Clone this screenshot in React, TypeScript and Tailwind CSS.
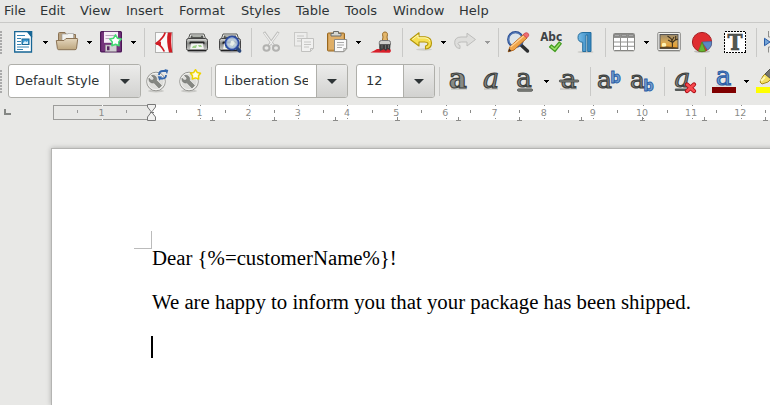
import type { ReactNode } from "react";

const Icon = ({ className = "", children }: { className?: string; children: ReactNode }) => (
  <svg viewBox="0 0 24 24" className={`h-6 w-6 shrink-0 overflow-visible ${className}`}>{children}</svg>
);

const Arrow = ({ className = "", muted = false }: { className?: string; muted?: boolean }) => (
  <svg viewBox="0 0 5 3" className={`h-[3px] w-[5px] shrink-0 ${className}`} shapeRendering="crispEdges">
    <path d="M0 0H5V1H4V2H3V3H2V2H1V1H0Z" fill={muted ? "#999" : "#000"} />
  </svg>
);

const Sep = ({ className = "" }: { className?: string }) => (
  <div className={`h-[29px] w-px shrink-0 bg-[#c9c9c7] ${className}`} />
);

const Grip = () => (
  <svg viewBox="0 0 2 23" className="h-[23px] w-[2px] shrink-0" shapeRendering="crispEdges">
    {[0, 3, 6, 9, 12, 15, 18, 21].map((y) => (
      <rect key={y} x="0" y={y} width="2" height="2" fill="#aaa" />
    ))}
  </svg>
);

const Combo = ({ text, className, inner }: { text: string; className: string; inner: string }) => (
  <div className={`flex h-[34px] shrink-0 overflow-hidden rounded-[3px] border border-[#afafaa] bg-white ${className}`}>
    <div className={`min-w-0 grow py-[7px] text-[13px] leading-[17px] ${inner}`}>
      <div className="overflow-hidden whitespace-nowrap">{text}</div>
    </div>
    <div className="flex w-[31px] shrink-0 items-center justify-center border-l border-[#afafaa] bg-linear-to-b from-[#ececeb] to-[#d2d2d0]">
      <svg viewBox="0 0 10 5" className="h-[5px] w-[10px]">
        <path d="M0 0H10L5 5Z" fill="#2e3436" />
      </svg>
    </div>
  </div>
);

const Printer = () => (
  <>
    <ellipse cx="12" cy="21.6" rx="10" ry="1.4" fill="#bbb" />
    <path d="M5 4H19L21 10H3Z" fill="#eeeeec" stroke="#555753" />
    <path d="M6 5.5H18L18.6 8H5.4Z" fill="#555753" />
    <path d="M7.5 6.2H16" stroke="#d3d7cf" />
    <rect x="1.5" y="8.5" width="21" height="12" rx="2" fill="url(#metal)" stroke="#444" />
    <rect x="4.5" y="11.5" width="15" height="3" rx="1" fill="#222" />
    <path d="M6 13.5H18L19.5 19.5H4.5Z" fill="#f5f5f3" stroke="#aaa" strokeWidth=".7" />
    <path d="M8 16L12 15L11 18H7ZM13 15H16L17 17H14Z" fill="#9fd28a" />
    <path d="M3 20.5H21" stroke="#222" strokeWidth="1.5" />
  </>
);

type GlyphProps = { x?: number; y?: number; size?: number; italic?: boolean; blue?: boolean; bold?: boolean };
const Glyph = ({ x = 2, y = 19, size = 25, italic = false, blue = false, bold = false }: GlyphProps) => (
  <text
    x={x}
    y={y}
    fontFamily="'DejaVu Serif', serif"
    fontSize={size}
    fontStyle={italic ? "italic" : "normal"}
    fontWeight={bold ? 700 : 400}
    fill={blue ? "#729fcf" : "#888a85"}
    stroke={blue ? "#2a5ca5" : "#3c403e"}
    strokeWidth="1.1"
  >
    a
  </text>
);

const ScriptB = ({ y }: { y: number }) => (
  <text
    x="13.2"
    y={y}
    fontFamily="'DejaVu Sans', sans-serif"
    fontWeight="700"
    fontSize="16.5"
    textLength="10.5"
    lengthAdjust="spacingAndGlyphs"
    fill="#729fcf"
    stroke="#2a5ca5"
    strokeWidth="1"
  >
    b
  </text>
);

const Wrench = () => (
  <>
    <ellipse cx="11" cy="22" rx="8" ry="1.5" fill="#c9c9c6" />
    <circle cx="11" cy="12.5" r="9.3" fill="#dededb" stroke="#979793" />
    <circle cx="11" cy="12.5" r="8.2" fill="none" stroke="#f3f3f1" />
    <path d="M6.5 6.5L9 9L8.3 11L6 11.3L4 9.2C3.5 12.5 6 14.5 9 13.8L14 19L16.5 16.5L11.5 11.5C12.4 8.8 10 5.5 6.5 6.5Z" fill="#858782" stroke="#70726e" strokeWidth=".6" />
  </>
);

const Menu = () => (
  <nav className="flex h-[23px] border-b border-[#c9c9c7] pl-[4px] text-[13px] leading-[21px]">
    <span className="w-[36px]">File</span>
    <span className="w-[40px]">Edit</span>
    <span className="w-[46px]">View</span>
    <span className="w-[53px]">Insert</span>
    <span className="w-[62px]">Format</span>
    <span className="w-[55px]">Styles</span>
    <span className="w-[49px]">Table</span>
    <span className="w-[48px]">Tools</span>
    <span className="w-[66px]">Window</span>
    <span>Help</span>
  </nav>
);

const StandardBar = () => (
  <div className="flex h-[39px] w-[800px] items-center pb-px">
    <Grip />
    <Icon className="ml-[9px]">
      <path d="M3.7 1.7H16.5L20.5 6.5V22H3.7Z" fill="#fff" stroke="#176695" strokeWidth="1.3" />
      <path d="M15.5 1H21.3V7.5Z" fill="#176695" />
      <path d="M6 5.5H14M6 8.5H10M6 11.5H10M6 14.5H10M6 17H18M6 19.5H12" stroke="#3684b2" />
      <rect x="11" y="9" width="7" height="5.5" fill="#3b98d0" stroke="#176695" />
      <path d="M12 13L14 11L15.5 12L17 11V14H12Z" fill="#d7eefa" />
    </Icon>
    <Arrow className="ml-[8px]" />
    <Icon className="ml-[7px]">
      <path d="M3.5 10V3.5Q3.5 2.5 4.5 2.5H10L11.5 4.5H20.5V12" fill="#b9a382" stroke="#8b7355" />
      <path d="M7 4H13V3.5H18.5V12H7Z" fill="#f2f2ef" stroke="#999" strokeWidth=".6" />
      <path d="M1.3 10.5H9L11 8.5H22Q22.8 8.5 22.6 9.5L21.5 18.5Q21.3 19.7 20 19.7H3.7Q2.6 19.7 2.4 18.5Z" fill="url(#folder)" stroke="#8b7355" />
    </Icon>
    <Arrow className="ml-[8px]" />
    <Icon className="ml-[7px]">
      <rect x="1.6" y="1.6" width="20.8" height="20.3" rx="1" fill="#75347c" stroke="#4b1757" strokeWidth="1.2" />
      <rect x="5" y="1.8" width="14" height="11" fill="#f6eef7" />
      <path d="M6.5 5.5H16M6.5 8.5H14" stroke="#bba7bd" />
      <rect x="6.5" y="15" width="11" height="6.5" fill="#d3d0d4" stroke="#999" strokeWidth=".5" />
      <rect x="8" y="16.3" width="2.5" height="4" fill="#5a2462" />
      <path d="M16.5 4.8L18.4 8.2L22.2 9L19.7 12L20.1 15.8L16.5 14.3L12.9 15.8L13.3 12L10.8 9L14.6 8.2Z" fill="#fff" stroke="#43dc72" strokeWidth="1.5" strokeLinejoin="round" />
    </Icon>
    <Arrow className="ml-[8px]" />
    <Sep className="ml-[8px]" />
    <Icon className="ml-[7px]">
      <rect x="3.5" y="2.5" width="17" height="20" fill="#fafafa" stroke="#b2b2b0" />
      <path d="M15.8 2.5H19.8Q18.5 11 20.3 22.5H17Q14 11 15.8 2.5Z" fill="#d01c24" />
      <path d="M13.2 2.5Q11.5 8 4.5 13.3Q9.5 15.5 12.3 21.5" fill="none" stroke="#d01c24" strokeWidth="1.7" />
      <path d="M4 12.8L9 11.5V15.5L4 14.8Z" fill="#d01c24" />
    </Icon>
    <Icon className="ml-[9px]"><Printer /></Icon>
    <Icon className="ml-[9px]">
      <Printer />
      <path d="M18.3 17.3L21.7 21" stroke="#2a4678" strokeWidth="3.4" strokeLinecap="round" />
      <circle cx="14" cy="13" r="6.5" fill="#b8c9d8" fillOpacity=".88" stroke="#2b4ba0" strokeWidth="2" />
      <circle cx="14" cy="13" r="5.3" fill="none" stroke="#8ca8dd" strokeWidth=".7" />
      <path d="M12 15L13 11L15 10.5L17 13L14.5 16Z" fill="#e7eee9" />
    </Icon>
    <Sep className="ml-[9px]" />
    <Icon className="ml-[7px]">
      <path d="M5 2L15 16M19.5 2L9.5 16" stroke="#bdbdbb" strokeWidth="2.8" />
      <path d="M5.3 2.8L14.5 15.5M19.2 2.8L10 15.5" stroke="#f1f1f0" strokeWidth="1.2" />
      <ellipse cx="7.5" cy="18" rx="3" ry="2.8" fill="none" stroke="#b2b2b0" strokeWidth="2" />
      <ellipse cx="17" cy="18" rx="3" ry="2.8" fill="none" stroke="#b2b2b0" strokeWidth="2" />
    </Icon>
    <Icon className="ml-[9px]">
      <rect x="2.5" y="2.5" width="12.5" height="13.5" fill="#ededec" stroke="#c9c9c7" />
      <path d="M5 6H12M5 8.5H12M5 11H10" stroke="#c6c6c4" />
      <path d="M9.5 8.5H21.5V18L18.5 21.5H9.5Z" fill="#f1f1f0" stroke="#c1c1bf" />
      <path d="M12 12H19M12 14.5H19M12 17H17" stroke="#c6c6c4" />
      <path d="M18.5 21.5V18.5H21.5" fill="none" stroke="#c1c1bf" />
    </Icon>
    <Icon className="ml-[9px]">
      <rect x="2.5" y="3" width="17" height="18" rx="1" fill="#d3a056" stroke="#98671e" />
      <path d="M4 4.5H18V19H4Z" fill="#dfaf68" />
      <path d="M6 6V3.5H8.5V1.5H13.5V3.5H16V6Z" fill="#d5d7d2" stroke="#6b6d69" />
      <path d="M9.5 9.5H21.7V18.5L18.7 21.7H9.5Z" fill="#fafafa" stroke="#8b8b88" />
      <path d="M12 12.5H19M12 15H19M12 17.5H17" stroke="#aaa" />
      <path d="M18.7 21.7V18.5H21.7Z" fill="#d4d4d1" stroke="#8b8b88" strokeWidth=".6" />
    </Icon>
    <Arrow className="ml-[7px]" />
    <Icon className="ml-[8px]">
      <path d="M1.3 22.6Q5.5 20.8 8 19L21 18.8Q23 21.2 20.5 22.8Z" fill="#d91f2a" />
      <path d="M13.3 11L14 7Q12.5 2 16 2Q19.5 2 18 7L18.7 11Z" fill="#e4b76b" stroke="#986b29" />
      <path d="M10.3 12.5Q10.3 10.5 12.5 10.5H19.5Q21.5 10.5 21.5 12.5V14.5H10.3Z" fill="#cfd0cd" stroke="#777" />
      <path d="M10.3 14.5H21.5L21 20.5L18.8 19L17 21L14.7 19.3L11 21Q9.8 18 10.3 14.5Z" fill="#3b3d3c" />
      <path d="M13 15V18.5M16.5 15V19M19.5 15V18" stroke="#777" strokeWidth=".8" />
    </Icon>
    <Sep className="ml-[9px]" />
    <Icon className="ml-[6px]">
      <ellipse cx="15" cy="19.5" rx="8" ry="1.2" fill="#cecec9" />
      <path d="M1.3 9.5L10 2.8V6.7H16Q22.5 7.2 22.5 13Q22.5 18.5 16.5 19V16Q19 15.5 19 13.3Q18.5 12 15.5 12H10V16Z" fill="#f6df52" stroke="#b39609" strokeWidth="1.1" strokeLinejoin="round" />
      <path d="M3.2 9.4L9 5V7.9H16Q20 8 21 11" fill="none" stroke="#fff8b5" />
    </Icon>
    <Arrow className="ml-[8px]" />
    <Icon className="ml-[7px]">
      <path d="M22.5 9.5L14 3.2V7H8Q1.7 7.2 1.7 12.5Q1.7 18 7 18.5V15.5Q5 15 5 13.3Q5 12 8.5 12H14V16Z" fill="#dededc" stroke="#bdbdbb" strokeLinejoin="round" />
    </Icon>
    <Arrow className="ml-[8px]" muted />
    <Sep className="ml-[8px]" />
    <Icon className="ml-[7px]">
      <path d="M15 15L21.5 21" stroke="#2c2e30" strokeWidth="3.4" strokeLinecap="round" />
      <circle cx="9.5" cy="9.5" r="7.3" fill="#d7e3ed" fillOpacity=".65" stroke="#2c4f94" strokeWidth="2.2" />
      <circle cx="9.5" cy="9.5" r="6.9" fill="none" stroke="#709bd2" strokeWidth=".7" />
      <path d="M2.2 21.8L4 16.5L17.5 4.5L21 8L8 20Z" fill="#f0a448" stroke="#b56212" strokeWidth=".9" />
      <path d="M4.5 17L18 5.8" stroke="#ffd193" strokeWidth="1.3" />
      <path d="M17 4.7L19 3Q21 2 22.4 3.7Q23.3 5.2 22.2 6.5L20.7 8Z" fill="#ef6d72" stroke="#c43d42" strokeWidth=".7" />
      <path d="M2.2 21.8L3.2 18.5L5.5 21Z" fill="#3b2c24" />
    </Icon>
    <Icon className="ml-[9px]">
      <text x="1.2" y="11" fontFamily="'DejaVu Sans', sans-serif" fontWeight="700" fontSize="11.5" textLength="22" lengthAdjust="spacingAndGlyphs" fill="#3e4346">Abc</text>
      <path d="M10.5 17L12.5 15L15.5 17.5L20.2 12L22.3 13.7L16 21.5Z" fill="#9bdf68" stroke="#439d20" strokeWidth="1.2" strokeLinejoin="round" />
    </Icon>
    <Icon className="ml-[9px]">
      <ellipse cx="13.5" cy="22" rx="8" ry="1" fill="#c9c9c6" />
      <path d="M19 2.5H11Q6 2.8 6 7.5Q6 12 10.7 12.3V21.5H14V5H15.7V21.5H19Z" fill="url(#pilcrow)" stroke="#246e9e" />
    </Icon>
    <Sep className="ml-[9px]" />
    <Icon className="ml-[6px]">
      <rect x="1.5" y="3.5" width="21" height="17" rx="1" fill="#fff" stroke="#858582" />
      <path d="M2 4H22V8H2Z" fill="#8a8a88" />
      <path d="M2 7.5H22M2 12H22M2 16.3H22M8.5 4V20.5M15.5 4V20.5" stroke="#929290" />
      <path d="M3 5.5H7M10 5.5H14M17 5.5H21" stroke="#aaa" />
      <path d="M2 21.5H22" stroke="#cacac7" />
    </Icon>
    <Arrow className="ml-[8px]" />
    <Icon className="ml-[8px]">
      <rect x=".8" y="2.5" width="22.5" height="18" rx="1" fill="#f3f3f1" stroke="#858582" />
      <rect x="3" y="4.5" width="18" height="14" fill="url(#sunset)" stroke="#555" />
      <circle cx="7" cy="15" r="2.3" fill="#fff4b5" />
      <path d="M15 18.5Q16.3 13 14 8.5L10.5 6M14.8 12L11 10M15.5 12.5L18.7 9.5V6M15 10.5L17 7M18.5 10L21 9" fill="none" stroke="#3f3220" strokeWidth="1.1" />
      <path d="M3 17L10 16.5L21 17.5V18.5H3Z" fill="#5b4423" />
      <path d="M1.5 21.5H23" stroke="#c5c5c2" />
    </Icon>
    <Icon className="ml-[9px]">
      <ellipse cx="12" cy="21.5" rx="8" ry="1.5" fill="#bdbdb9" />
      <circle cx="12" cy="12" r="9.6" fill="#df2d30" stroke="#a51c20" />
      <path d="M12 12L21.6 11.5Q22.2 17 17.5 20Z" fill="#5b8ac4" stroke="#3f67a0" strokeWidth=".7" />
      <path d="M12 12L15.5 21Q12 22.4 8.5 21Z" fill="#66b832" stroke="#438b1c" strokeWidth=".7" />
    </Icon>
    <Icon className="ml-[9px]">
      <rect x="1.5" y="1.5" width="21" height="21" fill="#fff" stroke="#000" strokeDasharray="2 1" shapeRendering="crispEdges" />
      <text x="4.4" y="20" fontFamily="'DejaVu Serif', serif" fontWeight="700" fontSize="22" textLength="15" lengthAdjust="spacingAndGlyphs" fill="#555753" stroke="#343836" strokeWidth=".6">T</text>
    </Icon>
    <Sep className="ml-[9px]" />
    <Icon className="ml-[5px]">
      <path d="M2.5 8.3L8 12L2.5 15.7Z" fill="#73a3d6" stroke="#2a5ca5" />
      <path d="M6.5 1V7H14M6.5 22.5V17H14" fill="none" stroke="#8e8e8b" />
    </Icon>
  </div>
);

const FormatBar = () => (
  <div className="flex h-[38px] w-[800px] items-center">
    <Grip />
    <Combo text="Default Style" className="ml-[6px] w-[133px]" inner="pl-[6px]" />
    <Icon className="ml-[4px]">
      <Wrench />
      <path d="M14 6Q14 2 18 2H21M21 6Q21 9.5 17.5 9.5H14" fill="none" stroke="#3567ac" strokeWidth="1.8" />
      <path d="M19.5 0L23.3 1L22 5.2ZM12.8 7.2L17 7.6L14.3 11.8Z" fill="#3567ac" />
    </Icon>
    <Icon className="ml-[9px]">
      <Wrench />
      <path d="M17.5 .7L19.2 3.4L22.5 4.2L20.5 6.8L20.7 10L17.5 8.9L14.3 10L14.5 6.8L12.5 4.2L15.8 3.4Z" fill="#fffce0" stroke="#eed400" strokeWidth="1.5" strokeLinejoin="round" />
    </Icon>
    <Sep className="ml-[9px]" />
    <Combo text="Liberation Serif" className="ml-[3px] w-[133px]" inner="pl-[8px] pr-[8px]" />
    <Combo text="12" className="ml-[8px] w-[79px]" inner="pl-[9px]" />
    <Sep className="ml-[4px]" />
    <Icon className="ml-[7px]"><path d="M4 20H20" stroke="#cececb" strokeWidth="2" /><Glyph x={2} y={18.7} size={27.5} bold /></Icon>
    <Icon className="ml-[9px]"><path d="M4 20H18" stroke="#cececb" strokeWidth="2" /><Glyph x={3} y={18.7} size={27} italic /></Icon>
    <Icon className="ml-[9px]">
      <Glyph x={3.3} y={17.8} size={26} />
      <rect x="4.5" y="19.9" width="15" height="2.3" rx="1" fill="#888a85" stroke="#3c403e" strokeWidth=".8" />
    </Icon>
    <Arrow className="ml-[7px]" />
    <Icon className="ml-[8px]">
      <path d="M3 20H20" stroke="#cececb" strokeWidth="2" />
      <Glyph x={3.7} y={18.7} size={26.5} />
      <rect x="2.3" y="11" width="19.5" height="2" rx="1" fill="#888a85" stroke="#3c403e" strokeWidth=".8" />
    </Icon>
    <Sep className="ml-[9px]" />
    <Icon className="ml-[6px]"><Glyph x={0} y={18.7} size={25} /><ScriptB y={14} /></Icon>
    <Icon className="ml-[9px]"><Glyph x={0} y={18.7} size={25} /><ScriptB y={22} /></Icon>
    <Sep className="ml-[10px]" />
    <Icon className="ml-[7px]">
      <Glyph x={2.5} y={17.5} size={26.5} italic />
      <path d="M4 20.7H14" stroke="#555957" strokeWidth="2.5" strokeLinecap="round" />
      <path d="M15 15.5L22 22M22 15.5L15 22" stroke="#a90c13" strokeWidth="4.3" strokeLinecap="round" />
      <path d="M15 15.5L22 22M22 15.5L15 22" stroke="#f8494e" strokeWidth="2.5" strokeLinecap="round" />
    </Icon>
    <Sep className="ml-[9px]" />
    <Icon className="ml-[6px]">
      <path d="M4 16.7H20" stroke="#cececb" />
      <Glyph x={3.8} y={15.5} size={26} blue />
      <rect x="0" y="18" width="24" height="6" fill="#800000" />
    </Icon>
    <Arrow className="ml-[8px]" />
    <Icon className="ml-[7px]">
      <path d="M4 13L7 7L13 1L19 6L12 13L6 15Z" fill="#f3de60" stroke="#a98b19" />
      <path d="M9 5L14 0L20 6L15 10Z" fill="#74746f" stroke="#50524e" />
      <path d="M5 12L9 8" stroke="#fff7b2" strokeWidth="2" />
      <rect x="0" y="18" width="24" height="6" fill="#ff0" />
    </Icon>
  </div>
);

const numbers = Array.from({ length: 12 }, (_, i) => i + 1);
const halves = Array.from({ length: 13 }, (_, i) => i);
const tabs = Array.from({ length: 10 }, (_, i) => i + 1);

const Ruler = () => (
  <svg viewBox="0 0 770 21" className="block h-[21px] w-full" shapeRendering="crispEdges">
    <path d="M4 9H6V13H11V15H4Z" fill="#858784" />
    <rect x="151" y="5" width="619" height="15" fill="#fff" />
    <rect x="53.5" y="5.5" width="98" height="14" fill="none" stroke="#9c9c9a" />
    <path d="M77 10H78V13H77ZM126 10H127V13H126Z" fill="#999" />
    <path d="M102 5H103V6H102ZM102 19H103V20H102Z" fill="#fff" />
    <g fill="#8b8b89" fontFamily="'DejaVu Sans', sans-serif" fontSize="9.5" textAnchor="middle">
      <text x="101.5" y="16">1</text>
      {numbers.map((n) => (
        <g key={n}>
          <text x={150.3 + 49.17 * n} y="16">{n}</text>
          <rect x={Math.floor(151.3 + 49.17 * n)} y="5" width="1" height="1" />
          <rect x={Math.floor(151.3 + 49.17 * n)} y="18" width="1" height="1" />
        </g>
      ))}
      {halves.map((n) => (
        <rect key={n} x={Math.floor(176 + 49.1 * n)} y="10" width="1" height="3" />
      ))}
      {tabs.map((n) => {
        const x = Math.floor(151.2 + 61.45 * n);
        return <path key={n} d={`M${x} 17H${x + 1}V20H${x + 3}V21H${x - 2}V20H${x}Z`} />;
      })}
    </g>
    <path d="M147.5 4.5H155.5V7L152 11.5V12.5L155.5 17V20.5H147.5V17L151 12.5V11.5L147.5 7Z" fill="#f1f1f0" stroke="#777" shapeRendering="auto" />
    <path d="M149.5 12.3H153.5" stroke="#777" />
  </svg>
);

export default function App() {
  return (
    <div className="relative flex h-[405px] w-[770px] flex-col overflow-hidden bg-[#e8e8e6] font-['DejaVu_Sans',sans-serif] text-[#2e3436]">
      <svg className="absolute h-0 w-0">
        <defs>
          <linearGradient id="metal" x2="0" y2="1"><stop stopColor="#e1e2df" /><stop offset=".4" stopColor="#868885" /><stop offset="1" stopColor="#d0d1ce" /></linearGradient>
          <linearGradient id="folder" x2="0" y2="1"><stop stopColor="#e4d6bd" /><stop offset="1" stopColor="#bda67e" /></linearGradient>
          <linearGradient id="pilcrow"><stop stopColor="#75bce8" /><stop offset="1" stopColor="#3182bd" /></linearGradient>
          <linearGradient id="sunset" x2="0" y2="1"><stop stopColor="#9c8a6b" /><stop offset=".5" stopColor="#d6a957" /><stop offset="1" stopColor="#ed9c25" /></linearGradient>
        </defs>
      </svg>
      <Menu />
      <StandardBar />
      <FormatBar />
      <Ruler />
      <main className="flex grow pt-[27px] pl-[51px]">
        <article className="w-[760px] shrink-0 border-t border-l border-[#b4b4b2] bg-white pl-[82px] font-['Liberation_Serif',serif] text-[20.8px] leading-6 text-black shadow-[0_0_5px_rgba(0,0,0,0.25)]">
          <div className="mt-[82px] h-[18px] w-[18px] border-r border-b border-[#bbb]" />
          <div className="pl-[18px] whitespace-nowrap">
            <p className="-mt-[3px]">Dear {"{%=customerName%}!"}</p>
            <p className="mt-[20px]">We are happy to inform you that your package has been shipped.</p>
            <div className="mt-[22px] -ml-px h-[22px] w-[2px] bg-black" />
          </div>
        </article>
      </main>
    </div>
  );
}
